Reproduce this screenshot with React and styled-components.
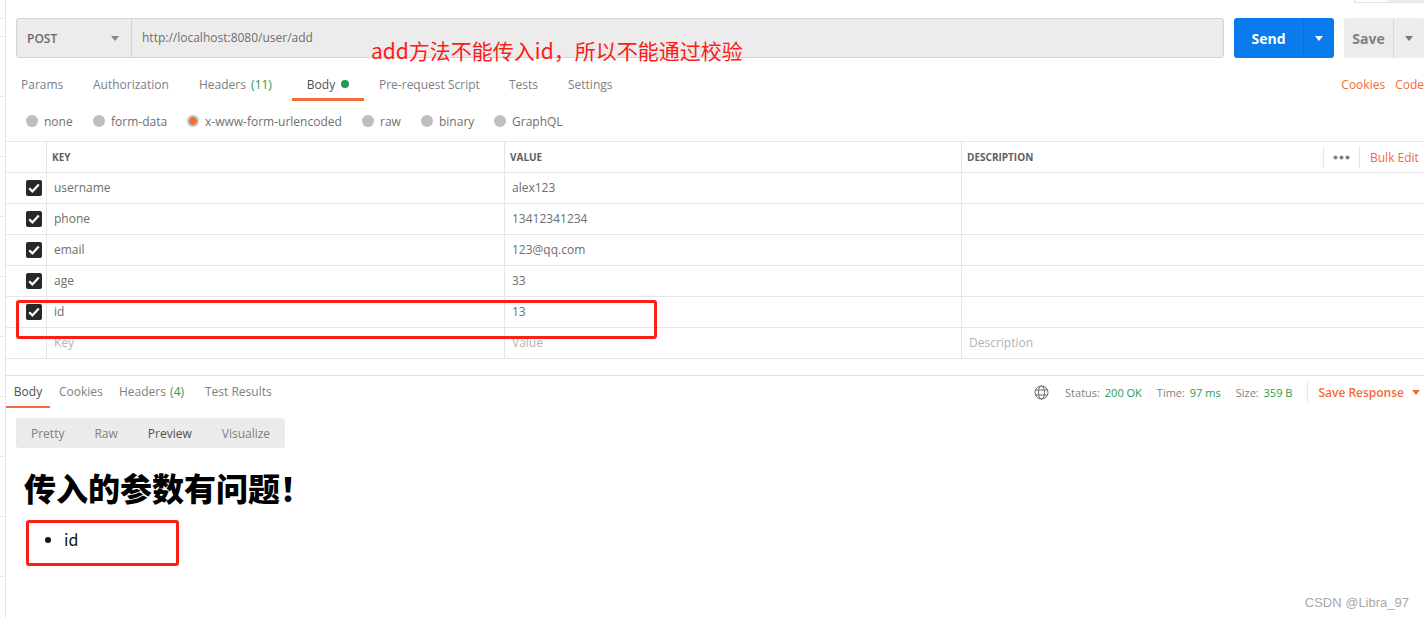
import React from 'react'
import styled, { createGlobalStyle } from 'styled-components'

const orange = '#f26b3a'
const green = '#249c50'

const GlobalStyle = createGlobalStyle`
  html, body {
    margin: 0;
    padding: 0;
    background: #fff;
  }
  * {
    box-sizing: border-box;
  }
`
const Page = styled.div`
  position: relative;
  display: flex;
  width: 1424px;
  height: 618px;
  overflow: hidden;
  background: #fff;
  font-family: "Open Sans", "Noto Sans CJK SC", sans-serif;
  font-size: 12px;
  color: #808080;
`
const Gutter = styled.div`
  flex: 0 0 6px;
  border-right: 1px solid #e6e6e6;
  background: repeating-linear-gradient(#e9e9e9 0 1px, transparent 1px 60px) 0 36px;
`
const Main = styled.div`
  flex: 1;
  min-width: 0;
`
const UrlRow = styled.div`
  display: flex;
  height: 40px;
  margin: 18px 0 0 10px;
`
const UrlBox = styled.div`
  display: flex;
  width: 1208px;
  background: #ececec;
  border: 1px solid #d4d4d4;
  border-radius: 3px;
`
const Method = styled.div`
  display: flex;
  align-items: center;
  justify-content: space-between;
  width: 115px;
  padding: 0 12px 0 10px;
  border-right: 1px solid #d4d4d4;
  font-weight: 600;
  color: #6b6b6b;
`
const UrlText = styled.div`
  display: flex;
  align-items: center;
  padding: 0 0 1px 10px;
  color: #6e6e6e;
`
const SendButton = styled.div`
  display: flex;
  width: 100px;
  margin-left: 10px;
  background: #097bed;
  border-radius: 3px;
  color: #fff;
  font-size: 14px;
  font-weight: 700;
`
const SendLabel = styled.div`
  display: flex;
  align-items: center;
  justify-content: center;
  width: 69px;
`
const SendCaret = styled.div`
  display: flex;
  align-items: center;
  justify-content: center;
  flex: 1;
  border-left: 1px solid #0a6fd6;
`
const SaveButton = styled.div`
  display: flex;
  width: 80px;
  margin-left: 10px;
  background: #ececec;
  border-radius: 3px;
  color: #808080;
  font-size: 14px;
  font-weight: 700;
`
const SaveLabel = styled.div`
  display: flex;
  align-items: center;
  justify-content: center;
  width: 49px;
`
const SaveCaret = styled.div`
  display: flex;
  align-items: center;
  justify-content: center;
  flex: 1;
  border-left: 1px solid #d9d9d9;
`
const TabRow = styled.div`
  display: flex;
  align-items: stretch;
  height: 43px;
  padding: 12px 0 0 15px;
`
const Tab = styled.div`
  display: flex;
  align-items: center;
  justify-content: ${p => (p.$active ? 'center' : 'flex-start')};
  width: ${p => p.$w}px;
  height: 31px;
  margin-right: ${p => (p.$active ? '15px' : '0')};
  white-space: pre;
  color: ${p => (p.$active ? '#505050' : '#808080')};
  border-bottom: 3px solid ${p => (p.$active ? orange : 'transparent')};
`
const Count = styled.span`
  margin-left: ${p => p.$gap}px;
  color: ${green};
`
const Dot = styled.span`
  width: 8px;
  height: 8px;
  margin-left: 6px;
  border-radius: 50%;
  background: ${green};
`
const TabLinks = styled.div`
  display: flex;
  gap: 10px;
  align-items: center;
  height: 28px;
  margin-left: auto;
`
const OrangeLink = styled.span`
  color: ${orange};
`
const ModeRow = styled.div`
  display: flex;
  align-items: center;
  height: 40px;
  padding-left: 20px;
`
const Mode = styled.div`
  display: flex;
  align-items: center;
  gap: 6px;
  ${p => p.$w && `width: ${p.$w}px;`}
  color: #707070;
`
const Radio = styled.span`
  width: 12px;
  height: 12px;
  border-radius: 50%;
  background: ${p => (p.$active ? `radial-gradient(circle, ${orange} 0 3.5px, #c4c4c4 4px)` : '#bfbfbf')};
`
const Table = styled.div`
  border-top: 1px solid #e6e6e6;
`
const HeadRow = styled.div`
  display: grid;
  grid-template-columns: 40px 458px 457px 1fr;
  height: 31px;
  border-bottom: 1px solid #e6e6e6;
`
const BodyRow = styled(HeadRow)``
const CheckCell = styled.div`
  display: flex;
  align-items: center;
  justify-content: flex-end;
  padding-right: 4px;
`
const HeadCell = styled.div`
  display: flex;
  align-items: center;
  padding-left: 5px;
  border-left: 1px solid #e6e6e6;
  font-size: 10px;
  font-weight: 700;
  color: #606060;
`
const HeadTools = styled.div`
  display: flex;
  align-items: center;
  height: 22px;
  margin-left: auto;
`
const Dots = styled.div`
  display: flex;
  align-items: center;
  justify-content: center;
  width: 37px;
  height: 22px;
  border-left: 1px solid #e6e6e6;
  border-right: 1px solid #e6e6e6;
`
const BulkEdit = styled.div`
  width: 64px;
  padding-left: 10px;
  font-size: 12px;
  font-weight: 400;
  color: ${orange};
`
const Cell = styled.div`
  display: flex;
  align-items: center;
  padding-left: 7px;
  padding-bottom: 1px;
  border-left: 1px solid #e6e6e6;
  color: ${p => (p.$ghost ? '#b3b3b3' : '#6e6e6e')};
`
const CheckBox = styled.span`
  display: flex;
  flex: none;
  align-items: center;
  justify-content: center;
  width: 16px;
  height: 16px;
  border-radius: 2px;
  background: #282828;
`
const ResponseBar = styled.div`
  display: flex;
  align-items: stretch;
  height: 33px;
  margin-top: 16px;
  border-top: 1px solid #e0e0e0;
`
const ResponseTab = styled.div`
  display: flex;
  align-items: center;
  justify-content: ${p => (p.$active ? 'center' : 'flex-start')};
  flex: none;
  width: ${p => p.$w}px;
  margin-right: ${p => (p.$active ? '9px' : '0')};
  white-space: pre;
  color: ${p => (p.$active ? '#505050' : '#808080')};
  border-bottom: 2px solid ${p => (p.$active ? orange : 'transparent')};
`
const Stats = styled.div`
  display: flex;
  align-items: center;
  margin-left: auto;
  margin-right: 4px;
  font-size: 11px;
  color: #808080;
`
const GlobeWrap = styled.span`
  display: flex;
  margin-right: 1px;
`
const Stat = styled.span`
  margin-left: 15px;
  white-space: pre;
  b {
    margin-left: 2px;
    font-weight: 400;
    color: ${green};
  }
`
const SaveResponse = styled.div`
  display: flex;
  align-items: center;
  gap: 8px;
  height: 20px;
  margin-left: 15px;
  padding-left: 10px;
  border-left: 1px solid #e6e6e6;
  font-size: 12px;
  font-weight: 600;
  color: ${orange};
`
const ViewGroup = styled.div`
  display: flex;
  width: 269px;
  height: 30px;
  margin: 10px 0 0 10px;
  background: #ebebeb;
  border-radius: 3px;
`
const ViewItem = styled.div`
  display: flex;
  align-items: center;
  padding: 0 15px;
  color: ${p => (p.$active ? '#505050' : '#808080')};
`
const Preview = styled.div`
  padding: 18px 0 0 18px;
  font-family: "Noto Sans CJK SC", "Liberation Sans", sans-serif;
  color: #000;
`
const Heading = styled.h1`
  margin: 0;
  font-size: 32px;
  line-height: 42px;
  font-weight: 900;
`
const ErrorList = styled.ul`
  margin: 20px 0 0;
  padding-left: 40px;
  font-family: "Noto Sans CJK SC", sans-serif;
  font-size: 16px;
  line-height: 22px;
  color: #111;
`
const Note = styled.div`
  position: absolute;
  left: 371px;
  top: 36px;
  font-family: "Noto Sans CJK SC", sans-serif;
  font-size: 21px;
  line-height: 28px;
  color: #ff1a1a;
  white-space: nowrap;
`
const Mark = styled.div`
  position: absolute;
  border: 3px solid #fb2013;
  border-radius: 3px;
`
const RowMark = styled(Mark)`
  left: 16px;
  top: 300px;
  width: 641px;
  height: 39px;
`
const ListMark = styled(Mark)`
  left: 26px;
  top: 520px;
  width: 153px;
  height: 46px;
`
const Watermark = styled.div`
  position: absolute;
  right: 15px;
  top: 595px;
  font-family: "Liberation Sans", sans-serif;
  font-size: 13px;
  line-height: 16px;
  color: #a8a8a8;
`
const TopSliver = styled.div`
  position: absolute;
  right: 0;
  top: 0;
  width: 70px;
  height: 3px;
  border: 1px solid #e3e3e3;
  border-top: 0;
  background: linear-gradient(90deg, #fff 0 32px, #eee 32px);
`

const rows = [
  ['username', 'alex123'],
  ['phone', '13412341234'],
  ['email', '123@qq.com'],
  ['age', '33'],
  ['id', '13'],
]

const requestTabs = [
  { label: 'Params', w: 72 },
  { label: 'Authorization', w: 106 },
  { label: 'Headers', count: '(11)', w: 93 },
  { label: 'Body', dot: true, w: 72, active: true },
  { label: 'Pre-request Script', w: 130 },
  { label: 'Tests', w: 59 },
  { label: 'Settings', w: 70 },
]

const bodyModes = [
  { label: 'none', w: 67 },
  { label: 'form-data', w: 94 },
  { label: 'x-www-form-urlencoded', w: 175, active: true },
  { label: 'raw', w: 59 },
  { label: 'binary', w: 73 },
  { label: 'GraphQL' },
]

const Caret = ({ color }) => (
  <svg width="8" height="5" viewBox="0 0 8 5">
    <path d="M0 0h8L4 5z" fill={color} />
  </svg>
)

const Check = () => (
  <svg width="12" height="10" viewBox="0 0 12 10">
    <path d="M1.2 5.2l3.2 3.2L10.8 1.6" fill="none" stroke="#fff" strokeWidth="2.2" />
  </svg>
)

const Globe = () => (
  <svg width="15" height="15" viewBox="0 0 15 15" fill="none" stroke="#6b6b6b" strokeWidth="1">
    <circle cx="7.5" cy="7.5" r="6.5" />
    <ellipse cx="7.5" cy="7.5" rx="3" ry="6.5" />
    <path d="M1.5 5h12M1.5 10h12" />
  </svg>
)

const MoreDots = () => (
  <svg width="17" height="5" viewBox="0 0 17 5" fill="#808080">
    <circle cx="2.5" cy="2.5" r="2" />
    <circle cx="8.5" cy="2.5" r="2" />
    <circle cx="14.5" cy="2.5" r="2" />
  </svg>
)

export default function App() {
  return (
    <Page>
      <GlobalStyle />
      <Gutter />
      <Main>
        <UrlRow>
          <UrlBox>
            <Method>
              POST
              <Caret color="#888" />
            </Method>
            <UrlText>http://localhost:8080/user/add</UrlText>
          </UrlBox>
          <SendButton>
            <SendLabel>Send</SendLabel>
            <SendCaret><Caret color="#fff" /></SendCaret>
          </SendButton>
          <SaveButton>
            <SaveLabel>Save</SaveLabel>
            <SaveCaret><Caret color="#777" /></SaveCaret>
          </SaveButton>
        </UrlRow>

        <TabRow>
          {requestTabs.map(t => (
            <Tab key={t.label} $w={t.w} $active={t.active}>
              {t.label}
              {t.count && <Count $gap={2}> {t.count}</Count>}
              {t.dot && <Dot />}
            </Tab>
          ))}
          <TabLinks>
            <OrangeLink>Cookies</OrangeLink>
            <OrangeLink>Code</OrangeLink>
          </TabLinks>
        </TabRow>

        <ModeRow>
          {bodyModes.map(m => (
            <Mode key={m.label} $w={m.w}>
              <Radio $active={m.active} />
              {m.label}
            </Mode>
          ))}
        </ModeRow>

        <Table>
          <HeadRow>
            <CheckCell />
            <HeadCell>KEY</HeadCell>
            <HeadCell>VALUE</HeadCell>
            <HeadCell>
              DESCRIPTION
              <HeadTools>
                <Dots><MoreDots /></Dots>
                <BulkEdit>Bulk Edit</BulkEdit>
              </HeadTools>
            </HeadCell>
          </HeadRow>
          {rows.map(([k, v]) => (
            <BodyRow key={k}>
              <CheckCell><CheckBox><Check /></CheckBox></CheckCell>
              <Cell>{k}</Cell>
              <Cell>{v}</Cell>
              <Cell />
            </BodyRow>
          ))}
          <BodyRow>
            <CheckCell />
            <Cell $ghost>Key</Cell>
            <Cell $ghost>Value</Cell>
            <Cell $ghost>Description</Cell>
          </BodyRow>
        </Table>

        <ResponseBar>
          <ResponseTab $w={44} $active>Body</ResponseTab>
          <ResponseTab $w={60}>Cookies</ResponseTab>
          <ResponseTab $w={86}>Headers<Count $gap={1}> (4)</Count></ResponseTab>
          <ResponseTab $w={80}>Test Results</ResponseTab>
          <Stats>
            <GlobeWrap><Globe /></GlobeWrap>
            <Stat>Status: <b>200 OK</b></Stat>
            <Stat>Time: <b>97 ms</b></Stat>
            <Stat>Size: <b>359 B</b></Stat>
            <SaveResponse>
              Save Response
              <Caret color={orange} />
            </SaveResponse>
          </Stats>
        </ResponseBar>

        <ViewGroup>
          <ViewItem>Pretty</ViewItem>
          <ViewItem>Raw</ViewItem>
          <ViewItem $active>Preview</ViewItem>
          <ViewItem>Visualize</ViewItem>
        </ViewGroup>

        <Preview>
          <Heading>传入的参数有问题！</Heading>
          <ErrorList>
            <li>id</li>
          </ErrorList>
        </Preview>
      </Main>

      <TopSliver />
      <Note>add方法不能传入id，所以不能通过校验</Note>
      <RowMark />
      <ListMark />
      <Watermark>CSDN @Libra_97</Watermark>
    </Page>
  )
}
